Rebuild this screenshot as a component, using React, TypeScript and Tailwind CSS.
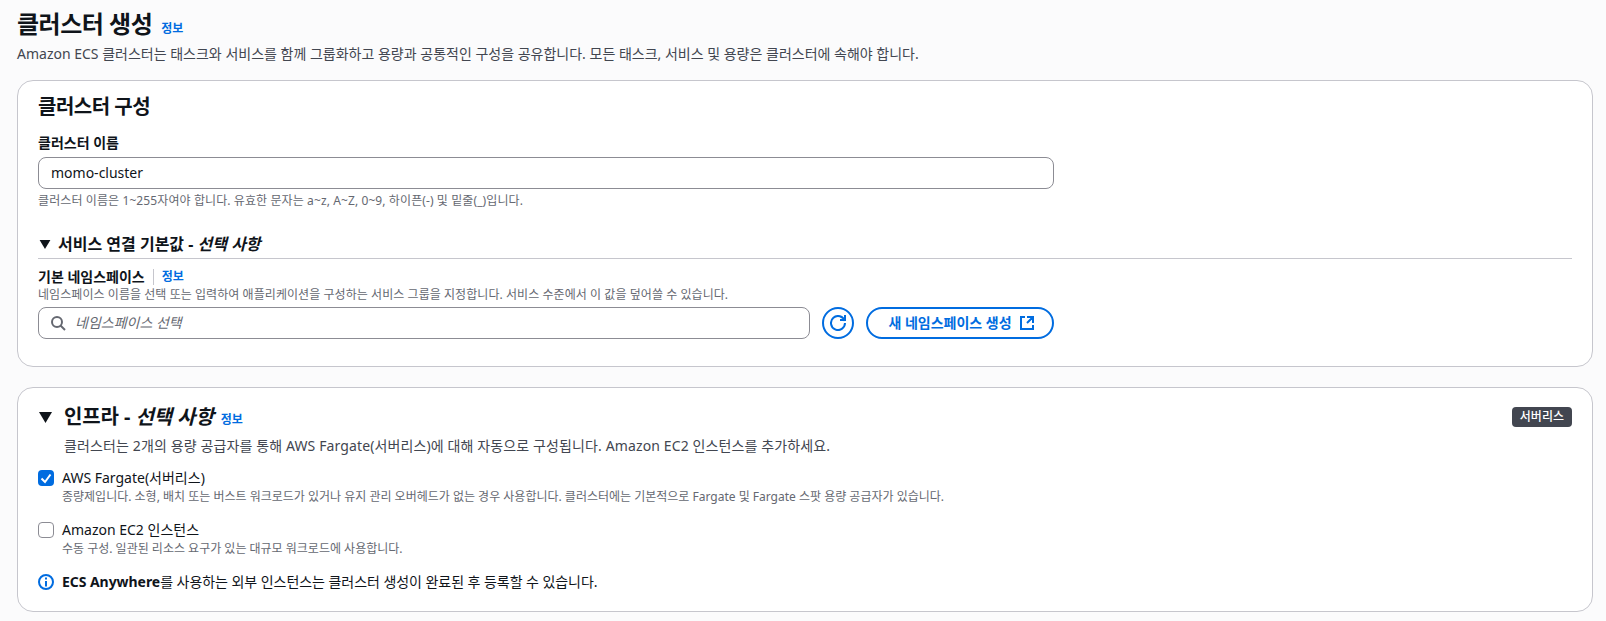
const font = { fontFamily: '"Noto Sans", "Noto Sans CJK KR", sans-serif' }

function InfoLink({ className = '' }: { className?: string }) {
  return <a className={`text-xs font-bold text-[#006ce0] ${className}`}>정보</a>
}

function Caret({ large }: { large?: boolean }) {
  return (
    <svg
      viewBox="0 0 12 10"
      className={large ? 'ml-[1px] h-[11px] w-[13px] text-[#0f141a]' : 'ml-[1px] h-[9px] w-[12px] text-[#0f141a]'}
    >
      <path d="M0 0h12L6 10z" fill="currentColor" />
    </svg>
  )
}

function Icon({ d, className = '', circle }: { d: string; className?: string; circle?: [number, number, number] }) {
  return (
    <svg viewBox="0 0 16 16" fill="none" stroke="currentColor" strokeWidth={2} className={`h-[16px] w-[16px] ${className}`}>
      {circle && <circle cx={circle[0]} cy={circle[1]} r={circle[2]} />}
      <path d={d} />
    </svg>
  )
}

function CheckOption({ checked, label, help }: { checked: boolean; label: string; help: string }) {
  return (
    <div className="flex gap-[8px]">
      <div
        className={
          checked
            ? 'mt-[1px] flex h-[16px] w-[16px] shrink-0 items-center justify-center rounded-[4px] bg-[#006ce0]'
            : 'mt-[1px] h-[16px] w-[16px] shrink-0 rounded-[4px] border border-[#8c8c94] bg-white'
        }
      >
        {checked && (
          <svg viewBox="0 0 16 16" fill="none" stroke="white" strokeWidth={2} className="h-[16px] w-[16px]">
            <path d="M3.5 8.5 7 12l5.5-7.5" />
          </svg>
        )}
      </div>
      <div>
        <div className="text-sm leading-[18px] text-[#0f141a]">{label}</div>
        <div className="mt-[2px] text-xs leading-[16px] text-[#656871]">{help}</div>
      </div>
    </div>
  )
}

export default function App() {
  return (
    <div className="min-h-[621px] overflow-hidden bg-[#fbfbfc] pt-[9px] pr-[13px] pl-[17px] text-[#0f141a]" style={font}>
      <div className="flex h-[30px] items-center gap-[9px]">
        <h1 className="text-2xl leading-[30px] font-bold tracking-[-0.5px]">클러스터 생성</h1>
        <InfoLink className="mt-[9px]" />
      </div>
      <p className="mt-[5px] text-sm leading-[20px] text-[#424650]">
        Amazon ECS 클러스터는 태스크와 서비스를 함께 그룹화하고 용량과 공통적인 구성을 공유합니다. 모든 태스크, 서비스 및 용량은 클러스터에 속해야 합니다.
      </p>

      <section className="mt-[16px] h-[287px] rounded-2xl border border-[#c6c6cd] bg-white px-[20px] pt-[12px]">
        <h2 className="text-xl leading-[28px] font-bold tracking-[-0.5px]">클러스터 구성</h2>
        <label className="mt-[12px] block text-sm leading-[20px] font-bold">클러스터 이름</label>
        <div className="mt-[4px] flex h-[32px] w-[1016px] items-center rounded-lg border border-[#8c8c94] bg-white px-[12px] text-sm">
          momo-cluster
        </div>
        <p className="mt-[4px] text-xs leading-[16px] tracking-[0.1px] text-[#656871]">
          클러스터 이름은 1~255자여야 합니다. 유효한 문자는 a~z, A~Z, 0~9, 하이픈(-) 및 밑줄(_)입니다.
        </p>

        <div className="mt-[23px] flex items-center gap-[7px] border-b border-[#c6c6cd] pb-[2px]">
          <Caret />
          <h3 className="text-base leading-[24px] font-bold">
            서비스 연결 기본값 - <em>선택 사항</em>
          </h3>
        </div>
        <div className="mt-[8px] flex h-[20px] items-center">
          <span className="text-sm font-bold">기본 네임스페이스</span>
          <span className="mx-[8px] h-[16px] border-l border-[#c6c6cd]" />
          <InfoLink />
        </div>
        <p className="text-xs leading-[16px] tracking-[0.06px] text-[#656871]">
          네임스페이스 이름을 선택 또는 입력하여 애플리케이션을 구성하는 서비스 그룹을 지정합니다. 서비스 수준에서 이 값을 덮어쓸 수 있습니다.
        </p>
        <div className="mt-[4px] flex items-center">
          <div className="flex h-[32px] w-[772px] items-center gap-[9px] rounded-lg border border-[#8c8c94] bg-white pl-[11px]">
            <Icon d="m15 15-4.5-4.5" circle={[7, 7, 5]} className="text-[#656871]" />
            <span className="text-sm text-[#656871] italic">네임스페이스 선택</span>
          </div>
          <button className="ml-[12px] flex h-[32px] w-[32px] items-center justify-center rounded-full border-2 border-[#006ce0] text-[#006ce0]">
            <Icon d="M10 5h5V0M15 8a7 7 0 1 1-.3-2" />
          </button>
          <button className="ml-[12px] flex h-[32px] w-[188px] items-center justify-center gap-[7px] rounded-full border-2 border-[#006ce0] pl-[3px] text-sm font-bold text-[#006ce0]">
            새 네임스페이스 생성
            <Icon d="M14 8V2H8M14 2 8 8M6 2H2v12h12v-4" />
          </button>
        </div>
      </section>

      <section className="mt-[20px] h-[225px] rounded-2xl border border-[#c6c6cd] bg-white px-[20px] pt-[15px]">
        <div className="flex h-[28px] items-center">
          <Caret large />
          <h2 className="ml-[12px] text-xl font-bold tracking-[-0.1px]">
            인프라 - <em>선택 사항</em>
          </h2>
          <InfoLink className="mt-[6px] ml-[7px]" />
          <span className="ml-auto rounded-[4px] bg-[#424650] px-[8px] text-xs leading-[20px] font-medium text-white">
            서버리스
          </span>
        </div>
        <p className="mt-[5px] pl-[26px] text-sm leading-[20px] tracking-[0.12px] text-[#424650]">
          클러스터는 2개의 용량 공급자를 통해 AWS Fargate(서버리스)에 대해 자동으로 구성됩니다. Amazon EC2 인스턴스를 추가하세요.
        </p>
        <div className="mt-[13px] flex flex-col gap-[16px]">
          <CheckOption
            checked
            label="AWS Fargate(서버리스)"
            help="종량제입니다. 소형, 배치 또는 버스트 워크로드가 있거나 유지 관리 오버헤드가 없는 경우 사용합니다. 클러스터에는 기본적으로 Fargate 및 Fargate 스팟 용량 공급자가 있습니다."
          />
          <CheckOption
            checked={false}
            label="Amazon EC2 인스턴스"
            help="수동 구성. 일관된 리소스 요구가 있는 대규모 워크로드에 사용합니다."
          />
        </div>
        <div className="mt-[15px] flex items-center gap-[8px] text-sm leading-[20px] tracking-[-0.05px]">
          <Icon d="M8 5.5V3.5M8 12.5V7" circle={[8, 8, 7]} className="text-[#006ce0]" />
          <span>
            <b>ECS Anywhere</b>를 사용하는 외부 인스턴스는 클러스터 생성이 완료된 후 등록할 수 있습니다.
          </span>
        </div>
      </section>
    </div>
  )
}
